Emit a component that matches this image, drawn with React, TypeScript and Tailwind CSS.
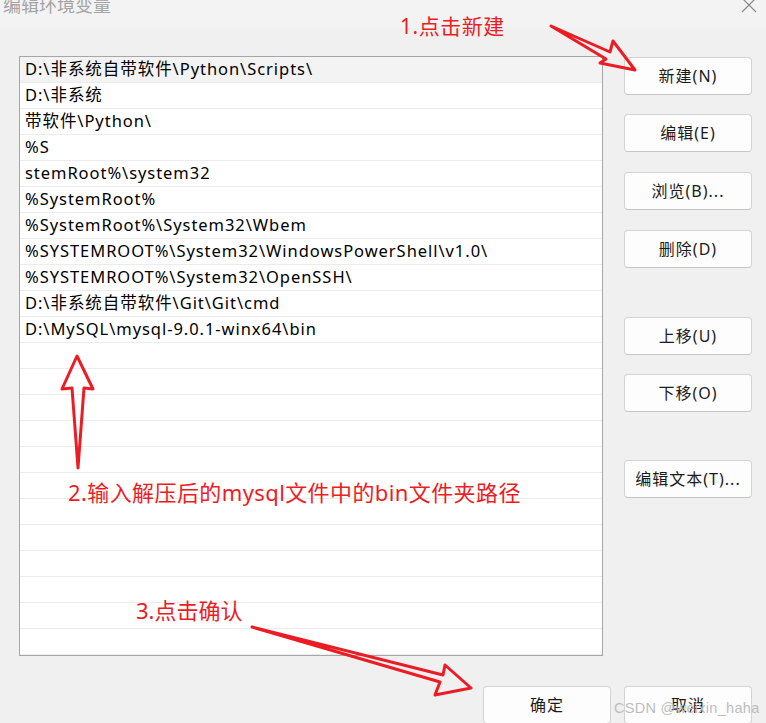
import React from "react";

const rows: string[] = [
  "D:\\非系统自带软件\\Python\\Scripts\\",
  "D:\\非系统",
  "带软件\\Python\\",
  "%S",
  "stemRoot%\\system32",
  "%SystemRoot%",
  "%SystemRoot%\\System32\\Wbem",
  "%SYSTEMROOT%\\System32\\WindowsPowerShell\\v1.0\\",
  "%SYSTEMROOT%\\System32\\OpenSSH\\",
  "D:\\非系统自带软件\\Git\\Git\\cmd",
  "D:\\MySQL\\mysql-9.0.1-winx64\\bin",
];

const allRows = [...rows, ...Array(23 - rows.length).fill("")];

const font = { fontFamily: '"Noto Sans", "Noto Sans CJK SC", sans-serif' };

function Btn({ label, className = "" }: { label: string; className?: string }) {
  return (
    <div
      className={
        "w-[128px] h-[38px] flex items-center justify-center bg-[#fdfdfd] border border-[#d3d3d3] border-b-[#c4c4c4] rounded-[4px] text-[16px] tracking-[1px] text-[#1b1b1b] " +
        className
      }
    >
      {label}
    </div>
  );
}

export default function App() {
  return (
    <div
      className="relative w-[766px] h-[723px] overflow-hidden bg-[#f0f0f0]"
      style={font}
    >
      {/* title bar */}
      <div className="h-[28px] bg-[#f3f3f3] flex justify-between items-start">
        <div
          className="ml-[3px] mt-[-5px] text-[18px] leading-[18px] text-[#a3a3a3]"
          style={{ fontFamily: '"Noto Sans CJK SC", sans-serif' }}
        >
          编辑环境变量
        </div>
        <svg width="16" height="16" viewBox="0 0 16 16" className="mr-[9px] mt-[-3px]">
          <path d="M1 1 L15 15 M15 1 L1 15" stroke="#8a8a8a" strokeWidth="1.2" fill="none" />
        </svg>
      </div>

      {/* main */}
      <div className="flex mt-[28px] ml-[19px]">
        <div className="w-[584px] h-[600px] border border-[#a6a6a6] bg-white overflow-hidden">
          {allRows.map((r, i) => (
            <div
              key={i}
              className={
                "h-[26px] border-b border-[#ececec] pl-[5px] flex items-center text-[16.5px] tracking-[0.95px] text-black whitespace-nowrap " +
                (i === 0 ? "bg-[#f3f3f3]" : "")
              }
            >
              {r}
            </div>
          ))}
        </div>
        <div className="ml-[21px] flex flex-col pt-[1px]">
          <Btn label="新建(N)" />
          <Btn label="编辑(E)" className="mt-[19px]" />
          <Btn label="浏览(B)..." className="mt-[20px]" />
          <Btn label="删除(D)" className="mt-[20px]" />
          <Btn label="上移(U)" className="mt-[49px]" />
          <Btn label="下移(O)" className="mt-[19px]" />
          <Btn label="编辑文本(T)..." className="mt-[48px]" />
        </div>
      </div>

      {/* bottom buttons */}
      <div className="flex justify-end gap-[13px] mr-[14px] mt-[30px]">
        <Btn label="确定" />
        <Btn label="取消" />
      </div>

      {/* annotations */}
      <svg
        className="absolute left-0 top-0 pointer-events-none"
        width="766"
        height="723"
        viewBox="0 0 766 723"
      >
        <g fill="none" stroke="#ec1c24" strokeWidth="3" strokeLinejoin="round" strokeLinecap="round">
          <polygon points="551,26 610,52 613,41 635,70 600,63 606,59" />
          <polygon points="77,356 93,389 84,388 78,468 72,388 62,389" />
          <polygon points="252,627 443,675 445,665 471,688 435,695 440,682" />
        </g>
      </svg>
      <div className="absolute left-[400px] top-[16px] text-[21px] tracking-[0.5px] leading-none text-[#ec1c24] whitespace-nowrap">
        1.点击新建
      </div>
      <div className="absolute left-[68px] top-[481px] text-[22px] tracking-[0.4px] leading-none text-[#ec1c24] whitespace-nowrap">
        2.输入解压后的mysql文件中的bin文件夹路径
      </div>
      <div className="absolute left-[136px] top-[599px] text-[22px] leading-none text-[#ec1c24] whitespace-nowrap">
        3.点击确认
      </div>
      <div
        className="absolute left-[614px] top-[701px] text-[14.5px] tracking-[0.3px] leading-none text-[#bdbdbd] whitespace-nowrap"
        style={{ fontFamily: '"Liberation Sans", sans-serif' }}
      >
        CSDN @weixin_haha
      </div>
    </div>
  );
}
